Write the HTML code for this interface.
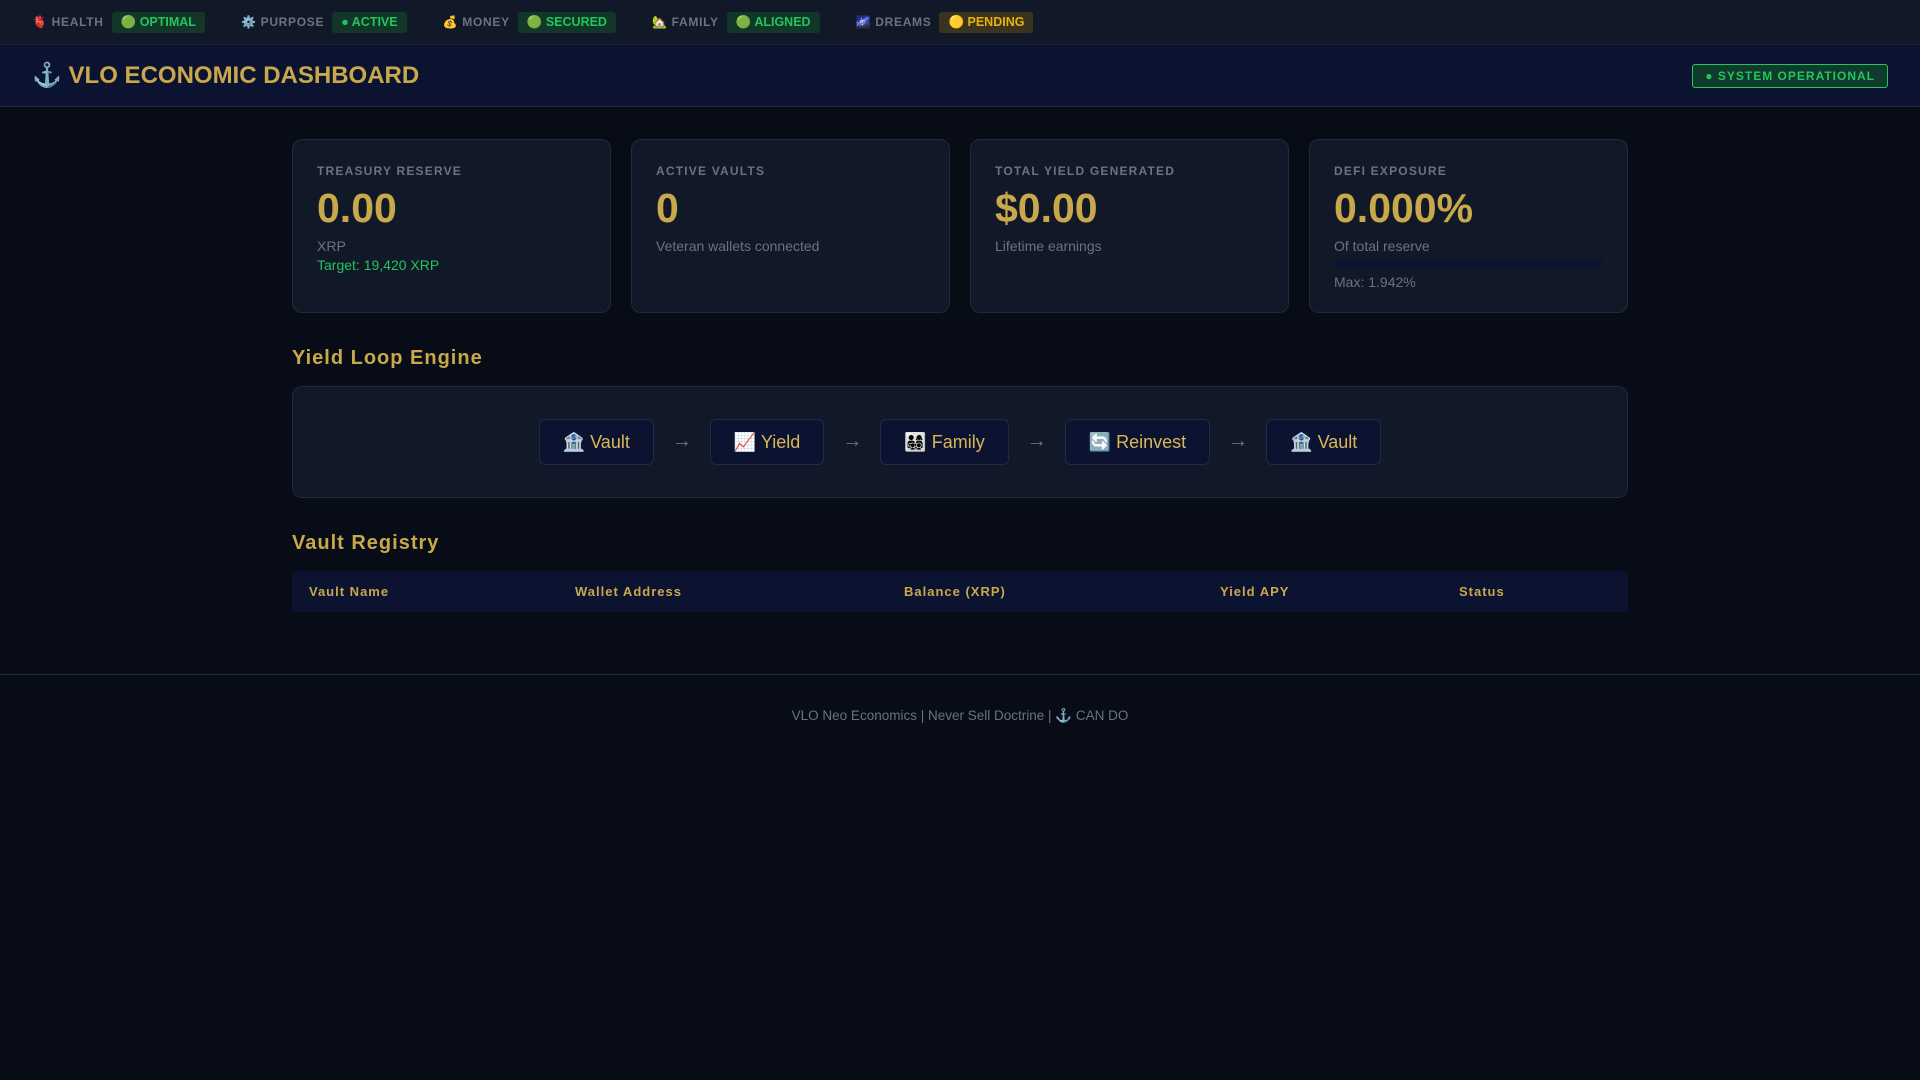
<!DOCTYPE html>
<html><head><meta charset="utf-8"><style>
*{box-sizing:border-box;margin:0;padding:0}
body{width:1920px;height:1080px;background:#070c17;font-family:"Liberation Sans","Noto Sans CJK SC",sans-serif;color:#e5e7eb;overflow:hidden}
.top{height:45px;background:#111827;display:flex;align-items:center;padding-left:32px;border-bottom:1px solid #1a2238}
.it{display:flex;align-items:center;margin-right:36px}
.lab{font-size:12px;font-weight:bold;color:#6b7280;letter-spacing:.7px;margin-right:8px}
.bd{font-size:12.5px;font-weight:bold;padding:0 9px;height:21px;line-height:21px;border-radius:3px;background:#123628;color:#22c55e}
.bd.p{background:#3a3320;color:#eab308}
.hdr{height:62px;background:#0c1330;border-bottom:1px solid #1e2a4a;display:flex;align-items:center;justify-content:space-between;padding:0 32px}
.hdr h1{font-size:24px;color:#c9a84c;font-weight:bold}
.ok{border:1px solid #22c55e;background:#0f3a2c;color:#22c55e;font-size:12px;font-weight:bold;letter-spacing:1px;padding:0 12px;height:24px;line-height:22px;border-radius:3px}
.wrap{width:1336px;margin:0 auto;padding-top:32px}
.cards{display:flex;gap:20px}
.card{width:319px;height:174px;background:#111827;border:1px solid #1f2a3d;border-radius:10px;padding:24px 24px}
.cl{font-size:12px;font-weight:bold;color:#6b7280;letter-spacing:1.2px}
.cv{font-size:41px;font-weight:bold;color:#c9a84c;margin-top:6px;line-height:48px}
.cs{font-size:14px;color:#6b7280;margin-top:6px}
.tg{font-size:14px;color:#22c55e;margin-top:3px}
.bar{height:9px;background:#0c1330;border-radius:4px;margin-top:5px}
h2{font-size:20px;color:#c9a84c;letter-spacing:1px;margin:34px 0 16px}
.loop{height:112px;background:#111827;border:1px solid #1f2a3d;border-radius:10px;display:flex;align-items:center;justify-content:center;gap:18px}
.b{height:46px;line-height:44px;padding:0 23px;background:#0c1330;border:1px solid #1e2a4a;border-radius:6px;font-size:18px;color:#d9b659}
.ar{color:#6b7280;font-size:20px;line-height:20px;margin-top:-2px}
.tbl{height:41px;background:#0c1330;border-radius:6px;position:relative;font-size:13px;font-weight:bold;color:#c9a84c;letter-spacing:1px}
.tbl span{position:absolute;top:13px}
.foot{position:absolute;top:674px;left:0;width:1920px;border-top:1px solid #1e2a3d;text-align:center;padding-top:33px;font-size:13.5px;color:#6b7280}
</style></head><body>
<div class="top">
<div class="it"><span class="lab">🫀 HEALTH</span><span class="bd">🟢 OPTIMAL</span></div>
<div class="it"><span class="lab">⚙️ PURPOSE</span><span class="bd">● ACTIVE</span></div>
<div class="it"><span class="lab">💰 MONEY</span><span class="bd">🟢 SECURED</span></div>
<div class="it"><span class="lab">🏡 FAMILY</span><span class="bd">🟢 ALIGNED</span></div>
<div class="it"><span class="lab">🌌 DREAMS</span><span class="bd p">🟡 PENDING</span></div>
</div>
<div class="hdr"><h1>⚓ VLO ECONOMIC DASHBOARD</h1><div class="ok">● SYSTEM OPERATIONAL</div></div>
<div class="wrap">
<div class="cards">
<div class="card"><div class="cl">TREASURY RESERVE</div><div class="cv">0.00</div><div class="cs">XRP</div><div class="tg">Target: 19,420 XRP</div></div>
<div class="card"><div class="cl">ACTIVE VAULTS</div><div class="cv">0</div><div class="cs">Veteran wallets connected</div></div>
<div class="card"><div class="cl">TOTAL YIELD GENERATED</div><div class="cv">$0.00</div><div class="cs">Lifetime earnings</div></div>
<div class="card"><div class="cl">DEFI EXPOSURE</div><div class="cv">0.000%</div><div class="cs">Of total reserve</div><div class="bar"></div><div class="cs" style="margin-top:6px">Max: 1.942%</div></div>
</div>
<h2>Yield Loop Engine</h2>
<div class="loop"><div class="b">🏦 Vault</div><span class="ar">→</span><div class="b">📈 Yield</div><span class="ar">→</span><div class="b">👨‍👩‍👧‍👦 Family</div><span class="ar">→</span><div class="b">🔄 Reinvest</div><span class="ar">→</span><div class="b">🏦 Vault</div></div>
<h2>Vault Registry</h2>
<div class="tbl"><span style="left:17px">Vault Name</span><span style="left:283px">Wallet Address</span><span style="left:612px">Balance (XRP)</span><span style="left:928px">Yield APY</span><span style="left:1167px">Status</span></div>
</div>
<div class="foot">VLO Neo Economics | Never Sell Doctrine | ⚓ CAN DO</div>
</body></html>
